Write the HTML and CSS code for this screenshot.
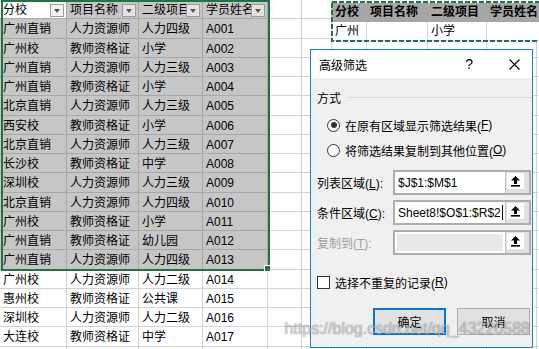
FILE: index.html
```html
<!DOCTYPE html>
<html lang="zh-CN">

<head>
    <meta charset="UTF-8">
    <meta name="viewport" content="width=device-width, initial-scale=1.0">
    <title>高级筛选</title>
    <link rel="stylesheet" href="styles.css">
</head>

<body>
    <div class="sheet">
        <!-- 表头 -->
        <div class="row head">
            <span class="active"><em>分校</em><b class="drop"></b></span>
            <span class="sel"><em>项目名称</em><b class="drop"></b></span>
            <span class="sel"><em>二级项目</em><b class="drop"></b></span>
            <span class="sel"><em>学员姓名</em><b class="drop"></b></span>
            <span></span><span></span><span></span><span></span><span></span><span></span><span></span>
        </div>
        <div class="row">
            <span class="sel">广州直销</span><span class="sel">人力资源师</span><span class="sel">人力四级</span><span class="sel">A001</span>
            <span></span><span></span><span></span><span></span><span></span><span></span><span></span>
        </div>
        <div class="row">
            <span class="sel">广州校</span><span class="sel">教师资格证</span><span class="sel">小学</span><span class="sel">A002</span>
            <span></span><span></span><span></span><span></span><span></span><span></span><span></span>
        </div>
        <div class="row">
            <span class="sel">广州直销</span><span class="sel">人力资源师</span><span class="sel">人力三级</span><span class="sel">A003</span>
            <span></span><span></span><span></span><span></span><span></span><span></span><span></span>
        </div>
        <div class="row">
            <span class="sel">广州直销</span><span class="sel">教师资格证</span><span class="sel">小学</span><span class="sel">A004</span>
            <span></span><span></span><span></span><span></span><span></span><span></span><span></span>
        </div>
        <div class="row">
            <span class="sel">北京直销</span><span class="sel">人力资源师</span><span class="sel">人力三级</span><span class="sel">A005</span>
            <span></span><span></span><span></span><span></span><span></span><span></span><span></span>
        </div>
        <div class="row">
            <span class="sel">西安校</span><span class="sel">教师资格证</span><span class="sel">小学</span><span class="sel">A006</span>
            <span></span><span></span><span></span><span></span><span></span><span></span><span></span>
        </div>
        <div class="row">
            <span class="sel">北京直销</span><span class="sel">人力资源师</span><span class="sel">人力三级</span><span class="sel">A007</span>
            <span></span><span></span><span></span><span></span><span></span><span></span><span></span>
        </div>
        <div class="row">
            <span class="sel">长沙校</span><span class="sel">教师资格证</span><span class="sel">中学</span><span class="sel">A008</span>
            <span></span><span></span><span></span><span></span><span></span><span></span><span></span>
        </div>
        <div class="row">
            <span class="sel">深圳校</span><span class="sel">人力资源师</span><span class="sel">人力三级</span><span class="sel">A009</span>
            <span></span><span></span><span></span><span></span><span></span><span></span><span></span>
        </div>
        <div class="row">
            <span class="sel">北京直销</span><span class="sel">人力资源师</span><span class="sel">人力四级</span><span class="sel">A010</span>
            <span></span><span></span><span></span><span></span><span></span><span></span><span></span>
        </div>
        <div class="row">
            <span class="sel">广州校</span><span class="sel">教师资格证</span><span class="sel">小学</span><span class="sel">A011</span>
            <span></span><span></span><span></span><span></span><span></span><span></span><span></span>
        </div>
        <div class="row">
            <span class="sel">广州直销</span><span class="sel">教师资格证</span><span class="sel">幼儿园</span><span class="sel">A012</span>
            <span></span><span></span><span></span><span></span><span></span><span></span><span></span>
        </div>
        <div class="row">
            <span class="sel">广州直销</span><span class="sel">人力资源师</span><span class="sel">人力四级</span><span class="sel">A013</span>
            <span></span><span></span><span></span><span></span><span></span><span></span><span></span>
        </div>
        <div class="row">
            <span>广州校</span><span>人力资源师</span><span>人力二级</span><span>A014</span>
            <span></span><span></span><span></span><span></span><span></span><span></span><span></span>
        </div>
        <div class="row">
            <span>惠州校</span><span>教师资格证</span><span>公共课</span><span>A015</span>
            <span></span><span></span><span></span><span></span><span></span><span></span><span></span>
        </div>
        <div class="row">
            <span>深圳校</span><span>人力资源师</span><span>人力二级</span><span>A016</span>
            <span></span><span></span><span></span><span></span><span></span><span></span><span></span>
        </div>
        <div class="row">
            <span>大连校</span><span>教师资格证</span><span>中学</span><span>A017</span>
            <span></span><span></span><span></span><span></span><span></span><span></span><span></span>
        </div>
        <div class="row">
            <span></span><span></span><span></span><span></span>
            <span></span><span></span><span></span><span></span><span></span><span></span><span></span>
        </div>

        <!-- 选区边框 -->
        <div class="selbox"></div>

        <!-- 条件区域 (复制虚线框) -->
        <div class="mini">
            <div class="mini-row mini-head">
                <span>分校</span><span>项目名称</span><span>二级项目</span><span>学员姓名</span>
            </div>
            <div class="mini-row">
                <span>广州</span><span></span><span>小学</span><span></span>
            </div>
            <svg class="ants" width="260" height="42">
                <rect x="2" y="1" width="300" height="39" fill="none" stroke="#217346" stroke-width="2" stroke-dasharray="5 2" />
            </svg>
        </div>

        <!-- 高级筛选对话框 -->
        <div class="dialog">
            <div class="dlg-title">
                <span class="dlg-name">高级筛选</span>
                <span class="dlg-help">?</span>
                <svg class="dlg-close" width="11" height="11" viewBox="0 0 11 11">
                    <path d="M0.5 0.5 L10.5 10.5 M10.5 0.5 L0.5 10.5" stroke="#000" stroke-width="1.1" />
                </svg>
            </div>
            <div class="dlg-body">
                <div class="legend">方式</div>
                <div class="opt"><i class="radio on"></i>在原有区域显示筛选结果(<u>F</u>)</div>
                <div class="opt opt2"><i class="radio"></i>将筛选结果复制到其他位置(<u>O</u>)</div>

                <div class="field-row first">
                    <label>列表区域(<u>L</u>):</label>
                    <div class="field">
                        <span class="value">$J$1:$M$1</span>
                        <span class="pick"><span class="pick-in"><svg width="9" height="11" viewBox="0 0 9 11"><path d="M4.5 0 L9 4.5 H6 V8 H3 V4.5 H0 Z" fill="#000" /><rect x="0" y="9" width="9" height="1.6" fill="#000" /></svg></span></span>
                    </div>
                </div>
                <div class="field-row">
                    <label>条件区域(<u>C</u>):</label>
                    <div class="field">
                        <span class="value">Sheet8!$O$1:$R$2<i class="caret"></i></span>
                        <span class="pick"><span class="pick-in"><svg width="9" height="11" viewBox="0 0 9 11"><path d="M4.5 0 L9 4.5 H6 V8 H3 V4.5 H0 Z" fill="#000" /><rect x="0" y="9" width="9" height="1.6" fill="#000" /></svg></span></span>
                    </div>
                </div>
                <div class="field-row off">
                    <label>复制到(<u>T</u>):</label>
                    <div class="field">
                        <span class="value"><span class="blank"></span></span>
                        <span class="pick"><span class="pick-in"><svg width="9" height="11" viewBox="0 0 9 11"><path d="M4.5 0 L9 4.5 H6 V8 H3 V4.5 H0 Z" fill="#000" /><rect x="0" y="9" width="9" height="1.6" fill="#000" /></svg></span></span>
                    </div>
                </div>

                <div class="check"><i class="box"></i>选择不重复的记录(<u>R</u>)</div>

                <div class="buttons">
                    <button class="btn default">确定</button>
                    <button class="btn">取消</button>
                </div>
            </div>
        </div>

        <div class="watermark">https://blog.csdn.net/qq_43220588</div>
    </div>
</body>

</html>
```

FILE: styles.css
```css
body {
    margin: 0;
    background: #fff;
    font-family: "Liberation Sans", "Noto Sans CJK SC", sans-serif;
    font-size: 12px;
    color: #000;
    overflow: hidden;
}

.sheet {
    position: relative;
    width: 539px;
    height: 349px;
    overflow: hidden;
}

/* 表格 */
.row {
    display: grid;
    grid-template-columns: 67px 72px 64px 65px 34px 30px 35px 61px 59px 50px 40px;
    height: 19.25px;
}

.row span {
    display: flex;
    box-sizing: border-box;
    padding: 3px 0 0 3px;
    line-height: 15px;
    border-right: 1px solid #d4d4d4;
    border-bottom: 1px solid #d4d4d4;
    white-space: nowrap;
    overflow: hidden;
}

.row .sel {
    background: #c6c6c6;
    border-color: #a8a8a8;
}

.row .active {
    background: #fff;
    border-color: #a8a8a8;
}

.head em {
    flex: 1;
    min-width: 0;
    overflow: hidden;
    font-style: normal;
}

.drop {
    flex: none;
    position: relative;
    width: 12px;
    height: 11px;
    margin: 1px 2px 0 0;
    background: #e4e4e4;
    border: 1px solid #9c9c9c;
}

.active .drop {
    background: #f4f4f4;
}

.drop::after {
    content: "";
    position: absolute;
    left: 3px;
    top: 4px;
    border-top: 4px solid #555;
    border-left: 3px solid transparent;
    border-right: 3px solid transparent;
}

.selbox {
    position: absolute;
    left: 1px;
    top: 0;
    width: 269px;
    height: 271px;
    box-sizing: border-box;
    border: 2px solid #217346;
}

.selbox::after {
    content: "";
    position: absolute;
    right: -3px;
    bottom: -3px;
    width: 5px;
    height: 5px;
    background: #217346;
    border: 1px solid #fff;
}

/* 条件区域 */
.mini {
    position: absolute;
    left: 332px;
    top: 3px;
    width: 215px;
    height: 38px;
    background: #fff;
}

.mini-row {
    display: grid;
    grid-template-columns: 35px 61px 59px 60px;
    height: 19px;
}

.mini-row span {
    box-sizing: border-box;
    padding: 2px 0 0 3px;
    line-height: 15px;
    border-right: 1px solid #d4d4d4;
    border-bottom: 1px solid #d4d4d4;
    white-space: nowrap;
    overflow: hidden;
}

.mini-head span {
    background: #a6a6a6;
    border-color: #a6a6a6;
    font-weight: bold;
}

.ants {
    position: absolute;
    left: -2px;
    top: -2px;
}

/* 对话框 */
.dialog {
    position: absolute;
    left: 310px;
    top: 49px;
    width: 223px;
    height: 299px;
    box-sizing: border-box;
    border: 1px solid #1c7fd6;
    background: #f0f0f0;
    display: flex;
    flex-direction: column;
}

.dlg-title {
    display: flex;
    align-items: center;
    height: 28px;
    padding-left: 8px;
    background: #fff;
}

.dlg-name {
    flex: 1;
}

.dlg-help {
    font-size: 14px;
    margin-right: 36px;
}

.dlg-close {
    margin-right: 12px;
}

.dlg-body {
    padding: 0 0 0 6px;
}

.legend {
    display: flex;
    align-items: center;
    height: 16px;
    margin-top: 11px;
}

.legend::after {
    content: "";
    flex: 1;
    height: 1px;
    margin-left: 8px;
    background: #d8d8d8;
}

.opt {
    display: flex;
    align-items: center;
    height: 16px;
    margin-top: 12px;
    padding-left: 10px;
}

.opt2 {
    margin-top: 9px;
}

.radio {
    position: relative;
    width: 11px;
    height: 11px;
    margin-right: 5px;
    border: 1px solid #333;
    border-radius: 50%;
    background: #fff;
}

.radio.on::after {
    content: "";
    position: absolute;
    left: 2.5px;
    top: 2.5px;
    width: 6px;
    height: 6px;
    border-radius: 50%;
    background: #333;
}

.field-row {
    display: flex;
    align-items: center;
    margin-top: 5px;
}

.field-row.first {
    margin-top: 12px;
}

.field-row label {
    width: 76px;
}

.field-row.off label {
    color: #a0a0a0;
}

.field {
    display: flex;
    width: 138px;
    height: 25px;
    box-sizing: border-box;
    border: 2px solid #adadad;
    background: #fff;
}

.value {
    flex: 1;
    display: flex;
    align-items: center;
    padding-left: 3px;
    white-space: nowrap;
}

.caret {
    width: 1px;
    height: 15px;
    margin-left: 1px;
    background: #000;
}

.off .value {
    padding: 2px;
}

.blank {
    flex: 1;
    align-self: stretch;
    background: #e8e8e8;
}

.pick {
    width: 22px;
    border-left: 1px solid #c4c4c4;
    background: #e1e1e1;
    padding: 1px 0 0 1px;
}

.pick-in {
    display: flex;
    justify-content: center;
    align-items: center;
    width: 17px;
    height: 16px;
    background: #fff;
}

.check {
    display: flex;
    align-items: center;
    height: 16px;
    margin-top: 19px;
}

.box {
    width: 11px;
    height: 11px;
    margin-right: 5px;
    border: 1px solid #333;
    background: #fff;
}

.buttons {
    display: flex;
    gap: 11px;
    margin: 18px 0 0 56px;
}

.btn {
    width: 73px;
    height: 27px;
    box-sizing: border-box;
    border: 1px solid #adadad;
    background: #e1e1e1;
    font-family: inherit;
    font-size: 12px;
    color: #000;
    padding: 0;
}

.btn.default {
    border: 2px solid #0078d7;
}

.watermark {
    position: absolute;
    right: 9px;
    top: 321px;
    font-size: 16px;
    line-height: 16px;
    color: rgba(255, 255, 255, 0.55);
    text-shadow: 0 0 1px rgba(0, 0, 0, 0.45), 0 0 2px rgba(0, 0, 0, 0.15);
    white-space: nowrap;
}
```
